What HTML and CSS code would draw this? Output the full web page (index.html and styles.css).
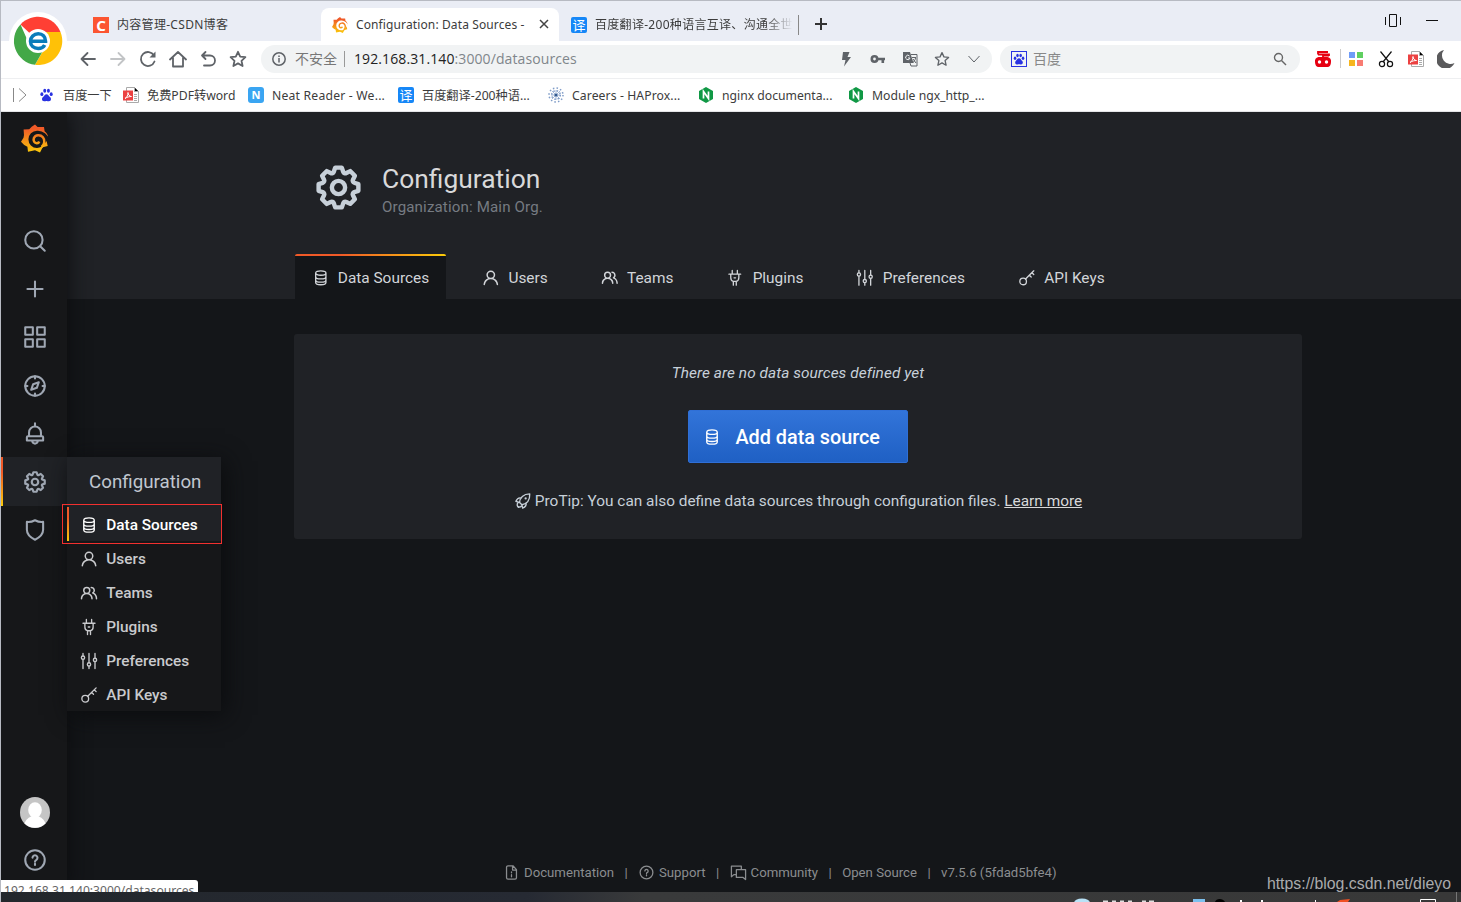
FILE: index.html
```html
<!DOCTYPE html>
<html lang="en">
<head>
    <meta charset="UTF-8">
    <meta name="viewport" content="width=device-width, initial-scale=1.0">
    <title>Configuration: Data Sources - Grafana</title>
    <link rel="stylesheet" href="styles.css">
</head>
<body>
    <!-- Icon sprite -->
    <svg class="sprite">
        <defs>
            <linearGradient id="flame" x1="0" y1="0" x2="0" y2="1">
                <stop offset="0.15" stop-color="#f05a28"/>
                <stop offset="1" stop-color="#fbca0a"/>
            </linearGradient>
            <linearGradient id="flame-line" gradientUnits="userSpaceOnUse" x1="0" y1="0" x2="0" y2="28">
                <stop offset="0.15" stop-color="#f05a28"/>
                <stop offset="1" stop-color="#fbca0a"/>
            </linearGradient>
        </defs>
        <symbol id="grafana" viewBox="0 0 28 28">
            <path fill="url(#flame)" d="M14 0l2.6 2.6L23 2.5l.6 4.2c2 1.4 3.4 3.700 3.600 6.300L25.500 16l1.200 5.400-5 1.400L19 28l-5-2.200L7 27.200l-.6-5L3.200 20.500 0 17.300l2.500-4L3 10.500 2.600 5l5.600-.3 2.500-2.500z"/>
            <path fill="currentColor" d="M16 6.200a8.600 8.600 0 0 0 0 17.200c3.500 0 6-1.500 7.600-4.300l2.200-2.600c.6-2 2-1.500 2.200-3.500-.8-.6-2.300-2.600-4-4.200A11 11 0 0 0 16 6.200z"/>
            <path fill="none" stroke="url(#flame-line)" stroke-width="2.500" d="M20.500 22.500c3.500-2.500 3.400-7.500 1.400-9.800-2.500-3-7.500-2.700-9 .8-1 2.800.6 5.300 3 5.200 1.200 0 2-.8 2.300-1.700"/>
        </symbol>
        <symbol id="cog" viewBox="0 0 24 24"><path fill="currentColor" d="M21.32,9.55l-1.89-.63.89-1.78A1,1,0,0,0,20.13,6L18,3.87a1,1,0,0,0-1.15-.19l-1.78.89-.63-1.89A1,1,0,0,0,13.5,2h-3a1,1,0,0,0-.95.68L8.92,4.57,7.14,3.68A1,1,0,0,0,6,3.87L3.87,6a1,1,0,0,0-.19,1.15l.89,1.78-1.89.63A1,1,0,0,0,2,10.5v3a1,1,0,0,0,.68.95l1.89.63-.89,1.78A1,1,0,0,0,3.87,18L6,20.13a1,1,0,0,0,1.15.19l1.78-.89.63,1.89a1,1,0,0,0,.95.68h3a1,1,0,0,0,.95-.68l.63-1.89,1.78.89A1,1,0,0,0,18,20.13L20.13,18a1,1,0,0,0,.19-1.15l-.89-1.78,1.89-.63A1,1,0,0,0,22,13.5v-3A1,1,0,0,0,21.32,9.55ZM20,12.78l-1.2.4A2,2,0,0,0,17.64,16l.57,1.14-1.1,1.1L16,17.64a2,2,0,0,0-2.79,1.16l-.4,1.2H11.22l-.4-1.2A2,2,0,0,0,8,17.64l-1.14.57-1.1-1.1L6.36,16A2,2,0,0,0,5.2,13.18L4,12.78V11.22l1.2-.4A2,2,0,0,0,6.36,8L5.79,6.89l1.1-1.1L8,6.36A2,2,0,0,0,10.82,5.2l.4-1.2h1.56l.4,1.2A2,2,0,0,0,16,6.36l1.14-.57,1.1,1.1L17.64,8a2,2,0,0,0,1.16,2.79l1.2.4ZM12,8a4,4,0,1,0,4,4A4,4,0,0,0,12,8Zm0,6a2,2,0,1,1,2-2A2,2,0,0,1,12,14Z"/></symbol>
        <symbol id="search" viewBox="0 0 24 24"><path class="line" d="M21 21l-4-4"/><circle class="line" cx="11" cy="11" r="8"/></symbol>
        <symbol id="plus" viewBox="0 0 24 24"><path class="line" d="M12 5v14M5 12h14"/></symbol>
        <symbol id="apps" viewBox="0 0 24 24"><path class="line" d="M3 3h7v7H3zM14 3h7v7h-7zM3 14h7v7H3zM14 14h7v7h-7z"/></symbol>
        <symbol id="compass" viewBox="0 0 24 24"><circle class="line" cx="12" cy="12" r="9"/><path class="line" d="M12 3v2M12 19v2M3 12h2M19 12h2M15.500 8.500l-1.800 5.200-5.200 1.800 1.800-5.200z"/></symbol>
        <symbol id="bell" viewBox="0 0 24 24"><path class="line" d="M12 2v3M6.500 14v-3.500a5.500 5.500 0 0 1 11 0V14M5.500 14h13a1 1 0 0 1 1 1v3h-15v-3a1 1 0 0 1 1-1zM9.500 19a2.600 2.600 0 0 0 5 0"/></symbol>
        <symbol id="shield" viewBox="0 0 24 24"><path class="line" d="M4.500 4.500c3 .4 5-.2 7.500-1.500 2.500 1.300 4.500 1.900 7.500 1.500v7.300c0 4-3 7-7.500 9.200-4.500-2.200-7.500-5.200-7.500-9.200z"/></symbol>
        <symbol id="help" viewBox="0 0 24 24"><circle class="line" cx="12" cy="12" r="9"/><path class="line" d="M9.700 9.800a2.300 2.300 0 1 1 3.600 2c-.9.500-1.300.9-1.300 1.700M12 15.500v1.200"/></symbol>
        <symbol id="database" viewBox="0 0 24 24"><path class="line" d="M5 5.500C5 3.500 8 2.500 12 2.500s7 1 7 3-3 3-7 3-7-1-7-3zv13c0 1.700 3 3 7 3s7-1.300 7-3v-13M5 10.500c0 1.700 3 3 7 3s7-1.300 7-3M5 15c0 1.700 3 3 7 3s7-1.300 7-3"/></symbol>
        <symbol id="user" viewBox="0 0 24 24"><path fill="currentColor" d="M15.71,12.71a6,6,0,1,0-7.42,0,10,10,0,0,0-6.22,8.18,1,1,0,0,0,2,.22,8,8,0,0,1,15.9,0,1,1,0,0,0,1,.89h.11a1,1,0,0,0,.88-1.1A10,10,0,0,0,15.71,12.71ZM12,12a4,4,0,1,1,4-4A4,4,0,0,1,12,12Z"/></symbol>
        <symbol id="users" viewBox="0 0 24 24"><path fill="currentColor" d="M12.3,12.22A4.92,4.92,0,0,0,14,8.5a5,5,0,0,0-10,0,4.92,4.92,0,0,0,1.7,3.72A8,8,0,0,0,1,19.5a1,1,0,0,0,2,0,6,6,0,0,1,12,0,1,1,0,0,0,2,0A8,8,0,0,0,12.3,12.22ZM9,11.5a3,3,0,1,1,3-3A3,3,0,0,1,9,11.5Zm9.74.32A5,5,0,0,0,15,3.5a1,1,0,0,0,0,2,3,3,0,0,1,3,3,3,3,0,0,1-1.5,2.59,1,1,0,0,0-.5.84,1,1,0,0,0,.45.86l.39.26.13.07a7,7,0,0,1,4,6.38,1,1,0,0,0,2,0A9,9,0,0,0,18.74,11.82Z"/></symbol>
        <symbol id="plug" viewBox="0 0 24 24"><path class="line" d="M8.500 2v5M15.500 2v5M4 7h16M6.500 7v5c0 2.500 1.500 4.500 3.500 5h4c2-.5 3.500-2.500 3.500-5V7M10 17v5M14 17v5M11 12h2"/></symbol>
        <symbol id="sliders" viewBox="0 0 24 24"><path class="line" d="M4 2v3M4 10v12M12 2v12M12 19v3M20 2v6M20 13v9"/><circle class="line" cx="4" cy="7.500" r="2.200"/><circle class="line" cx="12" cy="16.500" r="2.200"/><circle class="line" cx="20" cy="10.500" r="2.200"/></symbol>
        <symbol id="key" viewBox="0 0 24 24"><circle class="line" cx="7" cy="17" r="4.500"/><path class="line" d="M10.300 13.700L21.500 2.500M15.500 8.500l2.500 2.500M19 5l2.500 2.500"/></symbol>
        <symbol id="rocket" viewBox="0 0 24 24"><path class="line" d="M7.500 14c0-6 5-11.500 13.500-11.500C21.500 11 17 16.500 10.500 17zM9.500 8C6 7 4 9 2.500 12.500l5 1.500M16 14.500c1 3.500-1 5.500-4.500 7l-1-4.500M5.500 14c-2 2-1.500 5 .5 6.500M5 19c2 1.500 3 1.500 4.500 0"/><circle cx="15.500" cy="8.500" r="1.500" fill="currentColor"/></symbol>
        <symbol id="doc" viewBox="0 0 24 24"><path class="line" d="M14 2.500H7a2 2 0 0 0-2 2v15a2 2 0 0 0 2 2h10a2 2 0 0 0 2-2V8zM13.500 3v5.500H19M12 11v1.500M12 15v3"/></symbol>
        <symbol id="chat" viewBox="0 0 24 24"><path class="line" d="M16 8V3H2v15l3.500-3H9M9 8h13v14l-3.500-3H9z"/></symbol>
        <symbol id="paw" viewBox="0 0 16 16"><path fill="currentColor" d="M8 7c2 0 2.500 2 4 3.300 1.800 1.500 1.500 4.700-1.200 4.900-1.500 0-2-.3-2.800-.3s-1.300.3-2.800.3C2.500 15 2.200 11.800 4 10.300 5.500 9 6 7 8 7z"/><ellipse cx="2.700" cy="7" rx="1.700" ry="2.200" fill="currentColor"/><ellipse cx="6" cy="3.200" rx="1.700" ry="2.300" fill="currentColor"/><ellipse cx="10.200" cy="3.200" rx="1.700" ry="2.300" fill="currentColor"/><ellipse cx="13.400" cy="7" rx="1.700" ry="2.200" fill="currentColor"/></symbol>
        <symbol id="pdf" viewBox="0 0 16 16"><path fill="#fff" stroke="#aaa" d="M3.500.5h8l4 4v11h-12z"/><path stroke="#aaa" d="M11.500.5v4h4M11 7.500h3M11 9.500h3M11 11.500h3M11 13.500h3"/><path fill="#ec4141" d="M0 3.500h10v10H0z"/><path fill="none" stroke="#fff" d="M2 11.500C4 10.500 5 8 5 5.500c0 2 1.500 4 3.500 4-2 0-4.500.500-6.500 2"/></symbol>
        <symbol id="star" viewBox="0 0 18 18"><path class="line" d="M9 1.800l2.200 4.800 5.200.6-3.900 3.600 1.100 5.200L9 13.400 4.400 16l1.100-5.200L1.600 7.200l5.200-.6z"/></symbol>
        <symbol id="nginx" viewBox="0 0 16 16"><path fill="#109845" d="M8 0l7 4v8l-7 4-7-4V4z"/><path fill="none" stroke="#fff" stroke-width="1.700" d="M5.500 11.500v-7l5 7v-7"/></symbol>
    </svg>

    <!-- Tab strip -->
    <div class="tab-strip">
        <div class="tab tab-csdn"><span class="favicon csdn">C</span><span class="tab-title">内容管理-CSDN博客</span></div>
        <div class="tab tab-active">
            <svg class="favicon grafana"><use href="#grafana"/></svg>
            <span class="tab-title latin">Configuration: Data Sources -</span>
            <svg class="close" viewBox="0 0 10 10"><path d="M1 1l8 8M9 1L1 9"/></svg>
        </div>
        <div class="tab tab-fanyi"><span class="favicon fanyi">译</span><span class="tab-title fade">百度翻译-200种语言互译、沟通全世</span></div>
        <svg class="new-tab" viewBox="0 0 12 12"><path d="M6 0v12M0 6h12"/></svg>
        <div class="window-buttons">
            <svg width="16" height="14" viewBox="0 0 16 14"><path d="M.5 3v8M15.500 3v8M4.500.5h7v12h-7z"/></svg>
            <svg width="12" height="14" viewBox="0 0 12 14"><path d="M0 6.500h12"/></svg>
        </div>
        <svg class="browser-logo" viewBox="0 0 58 58">
            <circle cx="29" cy="29" r="29" fill="#fff"/>
            <path fill="#ff3f34" d="M29 29L11.500 12.500A24 24 0 0 1 51.500 20z"/>
            <path fill="#ffc107" d="M29 20h22.500A24 24 0 0 1 26 52.800L37 34z"/>
            <path fill="#43a847" d="M11.500 12.500A24 24 0 0 0 26 52.800L35 37 21 34z"/>
            <circle cx="29" cy="29" r="12" fill="#fff"/>
            <path fill="none" stroke="#0a7cba" stroke-width="3.600" d="M22 29.300h14.500c0-4.500-3-7.500-7.300-7.500s-7.700 3.200-7.700 7.500 3.300 7.200 7.700 7.200c3 0 5.300-1.200 6.500-3.500"/>
        </svg>
    </div>

    <!-- Address bar -->
    <div class="toolbar">
        <div class="nav-buttons">
            <svg viewBox="0 0 18 18"><path class="line" d="M16 9H2.500M8.500 3L2.500 9l6 6"/></svg>
            <svg class="disabled" viewBox="0 0 18 18"><path class="line" d="M2 9h13.500M9.500 3l6 6-6 6"/></svg>
            <svg viewBox="0 0 18 18"><path class="line" d="M15.500 11.500A7 7 0 1 1 15 5.500"/><path fill="currentColor" d="M16.500 1.500v6h-6z"/></svg>
            <svg viewBox="0 0 18 18"><path class="line" d="M1 9.500l8-7.500 8 7.500M4 8v8.500h10V8"/></svg>
            <svg viewBox="0 0 18 18"><path class="line" d="M3 5.500h8a5 5 0 0 1 0 10H5M6.500 2L3 5.500 6.500 9"/></svg>
            <svg><use href="#star"/></svg>
        </div>
        <div class="address">
            <svg class="info" viewBox="0 0 14 14"><circle cx="7" cy="7" r="6.200"/><path d="M7 6v4.500M7 3.500V5"/></svg>
            <span class="unsafe">不安全</span>
            <span class="url"><b>192.168.31.140</b>:3000/datasources</span>
            <div class="address-icons">
                <svg viewBox="0 0 16 16"><path fill="currentColor" d="M5 1h6.500L9.500 6H13L6 15.500 7.500 9H4z"/></svg>
                <svg viewBox="0 0 16 16"><path fill="none" stroke="currentColor" stroke-width="2.600" d="M7.500 8H15M12.800 8v4"/><circle cx="4.500" cy="8" r="2.700" fill="none" stroke="currentColor" stroke-width="2.600"/></svg>
                <svg viewBox="0 0 16 16"><path fill="currentColor" d="M1 1h7l3.500 11H1z"/><path fill="none" stroke="currentColor" d="M9 3.500h6v11.500H9l-1-3M10 6.500h4M13.500 7c0 2-2 4-3 5M11 8l3 4"/><path fill="none" stroke="#f1f3f4" d="M7.500 5a2.200 2.200 0 1 0 .5 2H6"/></svg>
                <svg viewBox="0 0 18 18"><use href="#star"/></svg>
                <svg viewBox="0 0 16 16"><path fill="none" stroke="currentColor" d="M2.500 5l5.500 6 5.500-6"/></svg>
            </div>
        </div>
        <div class="search-box">
            <span class="baidu-box"><svg><use href="#paw"/></svg></span>
            <span class="search-name">百度</span>
            <svg class="magnifier" viewBox="0 0 14 14"><circle cx="5.500" cy="5.500" r="4"/><path d="M8.500 8.500l4.500 4.500"/></svg>
        </div>
        <div class="extensions">
            <svg viewBox="0 0 18 18"><path fill="none" stroke="#e60012" stroke-width="1.800" d="M9 8V5.500h6M4 4.500V2h10M4 4.500h11v1.500"/><path fill="#e60012" d="M4.500 7h9a4.500 4.500 0 0 1 3.500 5c0 3-1.500 5-3.500 5h-9C2.500 17 1 15 1 12a4.500 4.500 0 0 1 3.500-5z"/><circle cx="5.500" cy="12" r="1.700" fill="#fff"/><circle cx="12.500" cy="12" r="1.700" fill="#fff"/></svg>
            <i class="divider"></i>
            <svg class="tiles" viewBox="0 0 14 14"><path fill="#6f9cf8" d="M0 0h6v6H0z"/><path fill="#5fcf61" d="M8 0h6v6H8z"/><path fill="#f6b51e" d="M0 8h6v6H0z"/><path fill="#f87b72" d="M8 8h6v6H8z"/></svg>
            <svg class="scissors" viewBox="0 0 16 18"><path d="M2.500 1.500L11 12M13.500 1.500L5 12"/><circle cx="4" cy="14" r="2.600"/><circle cx="12" cy="14" r="2.600"/></svg>
            <svg class="pdf"><use href="#pdf"/></svg>
            <svg class="moon" viewBox="0 0 18 18"><path d="M7 0a9.500 9.500 0 1 0 10.500 13A8.500 8.500 0 0 1 7 0z"/></svg>
        </div>
    </div>

    <!-- Bookmarks -->
    <div class="bookmarks">
        <svg class="expand" viewBox="0 0 14 14"><path d="M.5 0v14M6 .5L13 7l-7 6.500"/></svg>
        <a class="mark baidu"><svg class="paw"><use href="#paw"/></svg>百度一下</a>
        <a class="mark convert"><svg><use href="#pdf"/></svg>免费PDF转word</a>
        <a class="mark"><span class="favicon neat">N</span><span class="wide">Neat Reader - We...</span></a>
        <a class="mark"><span class="favicon fanyi">译</span>百度翻译-200种语...</a>
        <a class="mark"><svg viewBox="0 0 16 16"><g fill="none" stroke="#7f9cc8" stroke-width="1.500"><circle cx="8" cy="8" r="7" stroke-dasharray="1.500 2.200"/><circle cx="8" cy="8" r="4.300" stroke-dasharray="1.500 1.900"/><path d="M4 4l8 8M12 4l-8 8M8 3v10M3 8h10" stroke-width=".7"/></g><circle cx="8" cy="8" r="1.600" fill="#31598f"/></svg><span>Careers - HAProx...</span></a>
        <a class="mark"><svg><use href="#nginx"/></svg>nginx documenta...</a>
        <a class="mark"><svg><use href="#nginx"/></svg>Module ngx_http_...</a>
    </div>

    <!-- Grafana -->
    <div class="app">
        <nav class="sidebar">
            <svg class="logo"><use href="#grafana"/></svg>
            <a class="side-item"><svg><use href="#search"/></svg></a>
            <a class="side-item"><svg><use href="#plus"/></svg></a>
            <a class="side-item"><svg><use href="#apps"/></svg></a>
            <a class="side-item"><svg><use href="#compass"/></svg></a>
            <a class="side-item"><svg><use href="#bell"/></svg></a>
            <div class="side-item active">
                <svg><use href="#cog"/></svg>
                <div class="dropdown">
                    <div class="dropdown-title">Configuration</div>
                    <a class="dropdown-item current"><svg><use href="#database"/></svg>Data Sources</a>
                    <a class="dropdown-item"><svg><use href="#user"/></svg>Users</a>
                    <a class="dropdown-item"><svg><use href="#users"/></svg>Teams</a>
                    <a class="dropdown-item"><svg><use href="#plug"/></svg>Plugins</a>
                    <a class="dropdown-item"><svg><use href="#sliders"/></svg>Preferences</a>
                    <a class="dropdown-item"><svg><use href="#key"/></svg>API Keys</a>
                    <div class="highlight"></div>
                </div>
            </div>
            <a class="side-item"><svg><use href="#shield"/></svg></a>
            <div class="side-bottom">
                <svg class="avatar" viewBox="0 0 30 31"><ellipse cx="15" cy="15.500" rx="15" ry="15.500" fill="#c5c5c5"/><ellipse cx="15" cy="13" rx="6.800" ry="7.800" fill="#fff"/><path fill="#fff" d="M4.500 26.500C6 22 9 20.500 12 19h6c3 1.500 6 3 7.500 7.500a15 15 0 0 1-21 0z"/></svg>
                <a class="side-item"><svg><use href="#help"/></svg></a>
            </div>
        </nav>
        <main class="main">
            <header class="page-header">
                <div class="heading">
                    <svg><use href="#cog"/></svg>
                    <div>
                        <h1>Configuration</h1>
                        <div class="subtitle">Organization: Main Org.</div>
                    </div>
                </div>
                <div class="page-tabs">
                    <a class="page-tab selected"><svg><use href="#database"/></svg>Data Sources</a>
                    <a class="page-tab"><svg><use href="#user"/></svg>Users</a>
                    <a class="page-tab"><svg><use href="#users"/></svg>Teams</a>
                    <a class="page-tab"><svg><use href="#plug"/></svg>Plugins</a>
                    <a class="page-tab"><svg><use href="#sliders"/></svg>Preferences</a>
                    <a class="page-tab"><svg><use href="#key"/></svg>API Keys</a>
                </div>
            </header>
            <section class="empty-list">
                <div class="empty-title">There are no data sources defined yet</div>
                <a class="add-button"><svg><use href="#database"/></svg>Add data source</a>
                <div class="protip"><svg><use href="#rocket"/></svg>ProTip: You can also define data sources through configuration files. <a>Learn more</a></div>
            </section>
            <footer class="footer">
                <svg><use href="#doc"/></svg>Documentation<i>|</i>
                <svg><use href="#help"/></svg>Support<i>|</i>
                <svg><use href="#chat"/></svg>Community<i>|</i>
                <span>Open Source</span><i>|</i>
                <span>v7.5.6 (5fdad5bfe4)</span>
            </footer>
        </main>
        <div class="status-url">192.168.31.140:3000/datasources</div>
        <div class="watermark">https://blog.csdn.net/dieyo</div>
    </div>

    <!-- Desktop taskbar edge -->
    <div class="taskbar">
        <svg width="401" height="10" viewBox="0 0 401 10">
            <ellipse cx="22" cy="11" rx="8" ry="4.500" fill="#b9e2f7"/>
            <path fill="#ddd" d="M43 8.500h5v1.500h-5zM52 8.500h4v1.500h-4zM60 8.500h4v1.500h-4zM68 8.500h4v1.500h-4zM82 8.500h4v1.500h-4zM89 8.500h5v1.500h-5z"/>
            <path fill="#7cc0ee" d="M133 7h12v3h-12z"/>
            <path fill="#000" d="M155 10c1-4 8-4 10 0z"/>
            <path fill="#fff" d="M180 8h2v2h-2zM201 8h2v2h-2zM255 8h1v2h-1z"/>
            <path fill="#f05022" d="M277 10l3-2 10-1-2 3z"/>
            <path fill="none" stroke="#fff" d="M360.500 10V7.500h15V10"/>
            <path fill="#777" d="M396 0h1v10h-1z"/>
        </svg>
    </div>
</body>
</html>
```

FILE: styles.css
```css
* {
    box-sizing: border-box;
}
body {
    margin: 0;
    width: 1461px;
    height: 902px;
    overflow: hidden;
    display: flex;
    flex-direction: column;
    background-color: #fff;
    border-top: 1px solid #b7bac2;
    border-left: 1px solid #b7bac2;
    font-family: "Noto Sans", "Noto Sans CJK SC", sans-serif;
    font-size: 12px;
    color: #3c3c3c;
}
svg {
    flex: none;
    display: block;
}
.sprite {
    position: absolute;
    width: 0;
    height: 0;
}
.line {
    fill: none;
    stroke: currentColor;
    stroke-width: var(--stroke, 1.8);
    stroke-linejoin: round;
    stroke-linecap: round;
}

/* Tab strip */
.tab-strip {
    position: relative;
    flex: none;
    height: 40px;
    background-color: #eaedf5;
    display: flex;
    align-items: center;
    padding: 7px 23px 0 80px;
}
.tab {
    flex: none;
    height: 33px;
    display: flex;
    align-items: center;
    padding: 0 12px;
    white-space: nowrap;
}
.tab-csdn {
    width: 240px;
}
.tab-active {
    width: 238px;
    padding-left: 11px;
    background-color: #fff;
    border-radius: 8px 8px 0 0;
}
.tab-fanyi {
    width: 240px;
    padding-right: 0;
}
.tab-fanyi::after {
    content: "";
    flex: none;
    width: 1px;
    height: 20px;
    background-color: #888;
    margin-left: 5px;
}
.favicon {
    flex: none;
    width: 16px;
    height: 16px;
    margin-right: 8px;
    border-radius: 2px;
    color: #fff;
    font-size: 13px;
    line-height: 16px;
    text-align: center;
}
.csdn {
    background-color: #fc5531;
    border-radius: 0;
    font-size: 15px;
    font-weight: bold;
}
.grafana {
    color: #fff;
}
.fanyi {
    background-color: #1687f7;
}
.neat {
    background-color: #3aa5f2;
    border-radius: 3px;
    font-weight: bold;
    font-size: 11px;
}
.tab-title {
    padding-bottom: 1px;
    letter-spacing: 0.3px;
}
.latin {
    flex: none;
    width: 174px;
    letter-spacing: 0.12px;
}
.close {
    width: 10px;
    height: 10px;
    margin: 0 0 1px 9px;
    fill: none;
    stroke: #444;
    stroke-width: 1.5;
}
.fade {
    flex: none;
    width: 198px;
    -webkit-mask-image: linear-gradient(90deg, #000 86%, transparent);
    mask-image: linear-gradient(90deg, #000 86%, transparent);
}
.new-tab {
    width: 12px;
    height: 12px;
    margin: 0 0 1px 16px;
    stroke: #333;
    stroke-width: 2;
}
.window-buttons {
    margin: -7px 0 0 auto;
    display: flex;
    gap: 25px;
    fill: none;
    stroke: #111;
}
.browser-logo {
    position: absolute;
    left: 8px;
    top: 11px;
    width: 58px;
    height: 58px;
    z-index: 2;
}

/* Toolbar */
.toolbar {
    flex: none;
    height: 38px;
    display: flex;
    align-items: center;
    padding: 0 5px 2px 78px;
    border-bottom: 1px solid #eeeff1;
    color: #5f6368;
}
.nav-buttons {
    display: flex;
    gap: 12px;
    margin-right: 14px;
    --stroke: 1.8;
}
.nav-buttons svg {
    width: 18px;
    height: 18px;
}
.disabled {
    color: #c2c4c6;
}
.address, .search-box {
    flex: none;
    height: 28px;
    border-radius: 14px;
    background-color: #f1f3f4;
    display: flex;
    align-items: center;
}
.address {
    width: 731px;
    padding: 0 10px 0 11px;
}
.info {
    width: 14px;
    height: 14px;
    fill: none;
    stroke: #5f6368;
    stroke-width: 1.5;
}
.unsafe {
    font-size: 14px;
    line-height: 16px;
    margin-left: 9px;
    padding-right: 7px;
    border-right: 1px solid #999;
    color: #777;
}
.url {
    margin-left: 9px;
    font-family: "Open Sans", sans-serif;
    font-size: 14px;
    letter-spacing: 0.1px;
    color: #80868b;
}
.url b {
    font-weight: normal;
    color: #222;
}
.address-icons {
    margin-left: auto;
    display: flex;
    gap: 16px;
    --stroke: 1.5;
}
.address-icons svg {
    width: 16px;
    height: 16px;
}
.search-box {
    width: 300px;
    margin-left: 8px;
    padding: 0 13px 0 11px;
}
.baidu-box {
    width: 16px;
    height: 16px;
    border: 1px solid #2932e1;
    padding: 1px;
    color: #2932e1;
}
.baidu-box svg {
    width: 12px;
    height: 12px;
}
.search-name {
    font-size: 14px;
    margin: -2px 0 0 6px;
    color: #888;
}
.magnifier {
    width: 14px;
    height: 14px;
    margin-left: auto;
    fill: none;
    stroke: #666;
    stroke-width: 1.4;
}
.extensions {
    display: flex;
    align-items: center;
    margin-left: 14px;
}
.extensions svg {
    width: 18px;
    height: 18px;
}
.divider {
    width: 1px;
    height: 19px;
    background-color: #ccc;
    margin: 0 8px;
}
.extensions .tiles {
    width: 14px;
    height: 14px;
}
.extensions .scissors {
    width: 16px;
    margin-left: 15px;
    fill: none;
    stroke: #111;
    stroke-width: 1.2;
}
.extensions .pdf {
    width: 16px;
    height: 16px;
    margin-left: 14px;
}
.extensions .moon {
    margin-left: 13px;
    fill: #5a5a5c;
}

/* Bookmarks */
.bookmarks {
    flex: none;
    height: 33px;
    display: flex;
    align-items: center;
    padding-left: 12px;
    border-bottom: 1px solid #e4e5e7;
}
.expand {
    width: 14px;
    height: 14px;
    margin-right: 12px;
    fill: none;
    stroke: #888;
}
.mark {
    width: 150px;
    display: flex;
    align-items: center;
    white-space: nowrap;
    font-size: 12.2px;
}
.mark svg {
    width: 16px;
    height: 16px;
    margin-right: 8px;
}
.mark .paw {
    width: 15px;
    height: 14px;
    margin-right: 9px;
    color: #2932e1;
}
.baidu {
    width: 84px;
}
.convert {
    width: 125px;
}
.mark span:last-child {
    letter-spacing: 0.1px;
}
.mark .wide:last-child {
    letter-spacing: 0.2px;
}

/* App */
.app {
    position: relative;
    flex: none;
    height: 780px;
    display: flex;
    overflow: hidden;
    background-color: #141619;
    color: #c7d0d9;
    font-family: Roboto, sans-serif;
    font-size: 15.4px;
}
.sidebar {
    position: relative;
    z-index: 2;
    width: 66px;
    display: flex;
    flex-direction: column;
    background-color: #161719;
    box-shadow: 0 0 22px #0b0c0e;
    color: #9fa7b3;
}
.logo {
    width: 28px;
    height: 29px;
    margin: 12px 0 64px 20px;
    color: #161719;
}
.side-item {
    position: relative;
    height: 48.2px;
    display: flex;
    align-items: center;
    justify-content: center;
    padding-left: 2px;
    --stroke: 1.9;
}
.side-item > svg {
    width: 26px;
    height: 26px;
}
.active {
    height: 49px;
    margin-top: -0.8px;
    background-color: #202226;
}
.active::before {
    content: "";
    position: absolute;
    left: 0;
    top: 0;
    width: 2px;
    height: 100%;
    background: linear-gradient(#f05a28 30%, #fbca0a);
}
.dropdown {
    position: absolute;
    left: 66px;
    top: 0;
    width: 154px;
    background-color: #161719;
    box-shadow: 4px 4px 22px #0b0c0e;
}
.dropdown-title {
    height: 50px;
    padding-left: 22px;
    line-height: 51px;
    background-color: #202226;
    font-size: 18.75px;
    color: #c0c7d0;
}
.dropdown-item {
    position: relative;
    height: 34px;
    display: flex;
    align-items: center;
    padding: 2px 0 0 13px;
    font-weight: 500;
    font-size: 15.35px;
    color: #c9cacd;
    --stroke: 1.8;
}
.dropdown-item svg {
    width: 18px;
    height: 18px;
    margin-right: 8.3px;
}
.current {
    background-color: #202226;
    color: #fff;
}
.current::before {
    content: "";
    position: absolute;
    left: 0;
    top: 0;
    width: 2px;
    height: 34px;
    background: linear-gradient(#f05a28 30%, #fbca0a);
}
.highlight {
    position: absolute;
    left: -5px;
    top: 47px;
    width: 160px;
    height: 40px;
    border: 1px solid #f2302f;
}
.side-bottom {
    margin-top: auto;
    padding-bottom: 8.4px;
}
.avatar {
    width: 30px;
    height: 31px;
    margin: 0 0 7.4px 19px;
}
.main {
    flex: 1;
    display: flex;
    flex-direction: column;
}
.page-header {
    height: 187px;
    padding-left: 228px;
    display: flex;
    flex-direction: column;
    justify-content: space-between;
    background-color: #202226;
}
.heading {
    display: flex;
    padding: 49px 0 0 16.5px;
}
.heading svg {
    width: 53px;
    height: 53px;
    margin-right: 17.5px;
}
h1 {
    margin: 2px 0 0;
    font-size: 26.4px;
    font-weight: 400;
    line-height: 32px;
    color: #d8d9da;
}
.subtitle {
    margin-top: 3px;
    line-height: 18px;
    font-size: 15.1px;
    letter-spacing: 0.14px;
    color: #767b82;
}
.page-tabs {
    display: flex;
    gap: 20px;
}
.page-tab {
    position: relative;
    height: 45px;
    display: flex;
    align-items: center;
    padding: 3px 16.5px 0;
    color: #d2d5d9;
}
.page-tab svg {
    width: 17.6px;
    height: 17.6px;
    margin-right: 8.7px;
}
.selected {
    background-color: #141619;
    border-radius: 2px 2px 0 0;
    overflow: hidden;
}
.selected::before {
    content: "";
    position: absolute;
    left: 0;
    top: 0;
    width: 100%;
    height: 2px;
    background: linear-gradient(90deg, #f05a28 30%, #fbca0a 99%);
}
.empty-list {
    width: 1008px;
    height: 205px;
    margin: 35px 0 0 227px;
    padding-top: 30px;
    border-radius: 3px;
    display: flex;
    flex-direction: column;
    align-items: center;
    background-color: #202226;
}
.empty-title {
    font-style: italic;
    line-height: 18px;
    letter-spacing: 0.06px;
}
.add-button {
    width: 220px;
    height: 53px;
    margin: 28px 0;
    padding: 1px 0 0 14px;
    display: flex;
    align-items: center;
    border: 1px solid #2f6fd6;
    border-radius: 2px;
    background: linear-gradient(#3274d9, #1f60c4);
    color: #fff;
    font-size: 19.8px;
    font-weight: 500;
}
.add-button svg {
    width: 18px;
    height: 20px;
    margin: 0 14.5px 0 0;
}
.protip {
    display: flex;
    align-items: center;
    line-height: 20px;
    white-space: pre;
}
.protip svg {
    width: 18px;
    height: 18px;
    margin-right: 3px;
}
.protip a {
    color: #d8d9da;
    text-decoration: underline;
}
.footer {
    margin: auto 0 10px;
    padding-left: 436px;
    display: flex;
    align-items: center;
    font-size: 13.2px;
    line-height: 18px;
    color: #8b8d90;
}
.footer svg {
    width: 17px;
    height: 17px;
    margin: -2px 4px 0 0;
}
.footer i {
    width: 24px;
    text-align: center;
    font-style: normal;
}
.status-url {
    position: absolute;
    z-index: 3;
    left: 0;
    bottom: 0;
    width: 197px;
    height: 12px;
    padding-left: 3px;
    overflow: hidden;
    border-top-right-radius: 3px;
    background-color: #fff;
    color: #666;
    font-family: "Noto Sans", sans-serif;
    font-size: 12.1px;
    line-height: 21px;
}
.watermark {
    position: absolute;
    right: 10px;
    bottom: -1px;
    font-family: "Liberation Sans", sans-serif;
    font-size: 15.85px;
    line-height: 18px;
    color: #aaabad;
}
.taskbar {
    position: relative;
    flex: none;
    height: 10px;
    display: flex;
    justify-content: flex-end;
    background: linear-gradient(90deg, #23272c, #262a33 36%, #393a3b 44%, #383838);
}
```
